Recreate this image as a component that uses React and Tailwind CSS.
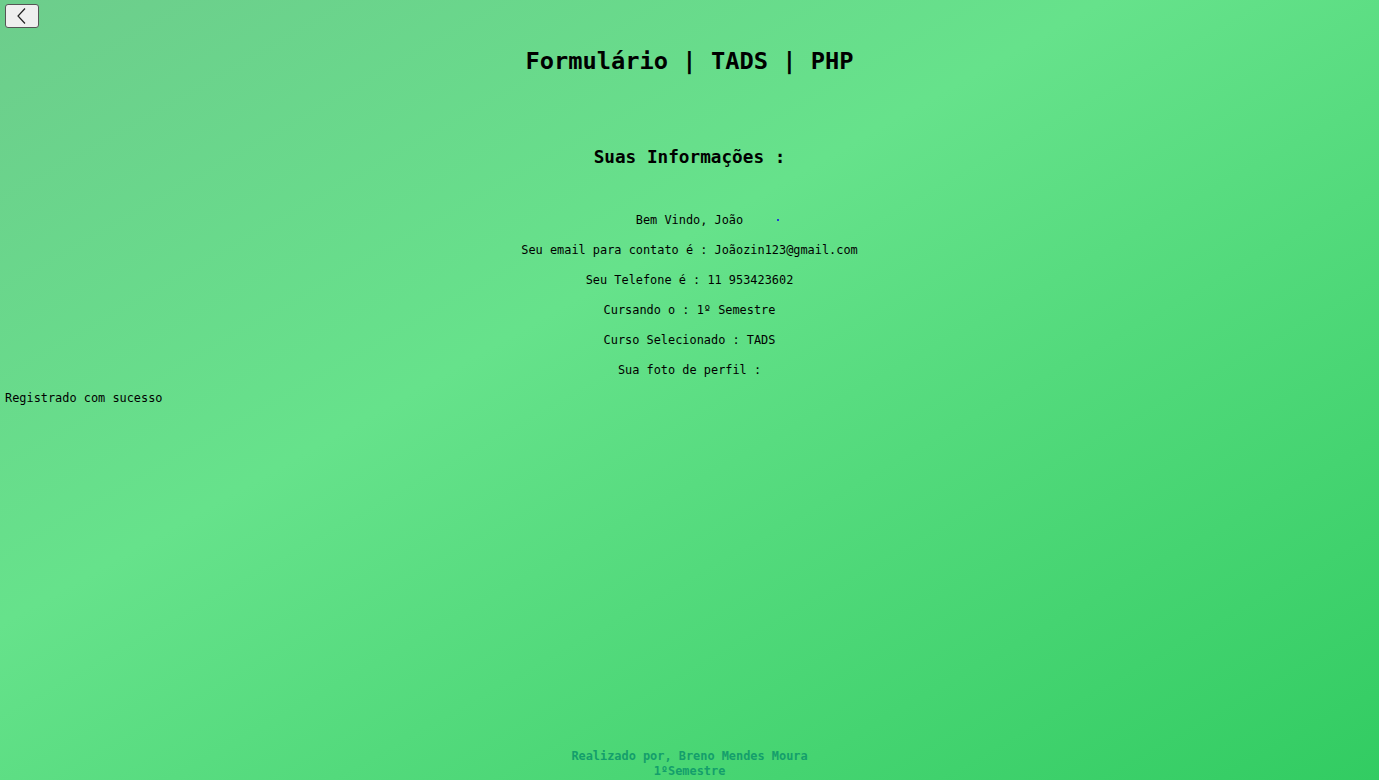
import React from "react";

export default function App() {
  const mono = { fontFamily: '"DejaVu Sans Mono", "Liberation Mono", monospace' };
  const lines = [
    "Seu email para contato é : Joãozin123@gmail.com",
    "Seu Telefone é : 11 953423602",
    "Cursando o : 1º Semestre",
    "Curso Selecionado : TADS",
    "Sua foto de perfil :",
  ];
  return (
    <div
      className="w-full h-[780px] flex flex-col text-black bg-[linear-gradient(to_bottom_right,#6dcd8c_0%,#66e28b_40%,#32cc62_100%)]"
      style={mono}
    >
      <div className="pl-[5px] pt-[4px]">
        <button className="w-[34px] h-[24px] bg-[#efefef] border border-[#555] rounded-[3px] flex items-center justify-center">
          <svg width="14" height="18" viewBox="0 0 14 18" fill="none">
            <path d="M10 1.5 L3 9 L10 16.5" stroke="#222" strokeWidth="1.2" />
          </svg>
        </button>
      </div>
      <h1 className="text-center font-bold text-[23.7px] leading-[28px] mt-[19px]">
        Formulário | TADS | PHP
      </h1>
      <h2 className="text-center font-bold text-[17.7px] leading-[21px] mt-[72px]">
        Suas Informações :
      </h2>
      <div className="flex flex-col gap-[16px] mt-[45px] text-[11.9px] leading-[14px]">
        <p className="relative text-center">
          Bem Vindo, João
          <span className="absolute top-[6px] left-[calc(50%+87px)] w-[2px] h-[2px] bg-[#1d3fd8]"></span>
        </p>
        {lines.map((l) => (
          <p key={l} className="text-center">{l}</p>
        ))}
      </div>
      <p className="mt-[14px] pl-[5px] text-[11.9px] leading-[14px]">Registrado com sucesso</p>
      <footer className="mt-auto pb-[1px] text-center font-bold text-[11.9px] leading-[15px] text-[#149e6b]">
        <div>Realizado por, Breno Mendes Moura</div>
        <div>1ºSemestre</div>
      </footer>
    </div>
  );
}
